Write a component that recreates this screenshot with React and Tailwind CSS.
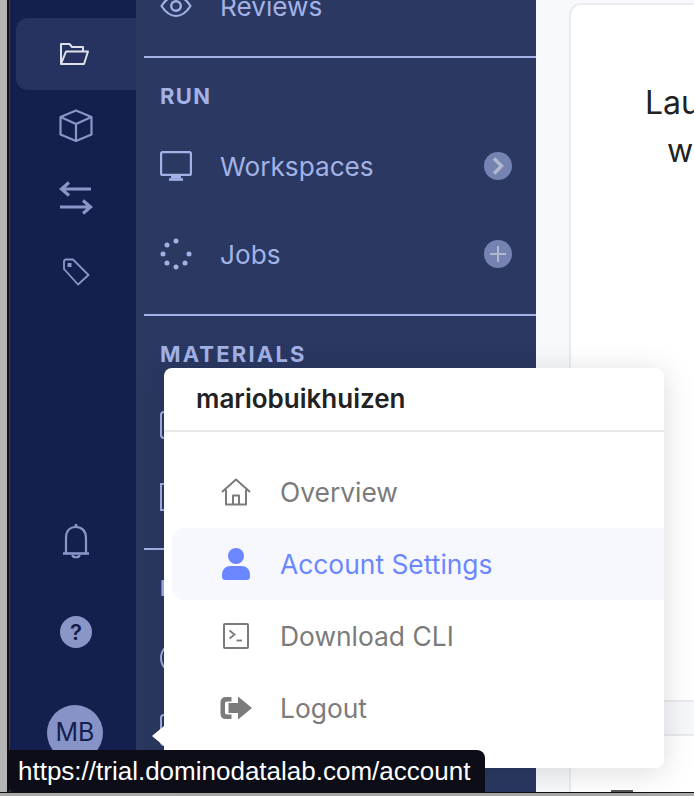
import React from "react";

const Cube = () => (
  <svg width="34" height="34" viewBox="0 0 34 34" fill="none" stroke="#8a96c8" strokeWidth="2.2" strokeLinejoin="round">
    <path d="M17 1.5 32.5 8v17.5L17 32 1.5 25.5V8Z" />
    <path d="M1.5 8 17 15l15.5-7M17 15v17" />
  </svg>
);

const Folder = () => (
  <svg width="29" height="22" viewBox="0 0 29 22" fill="none" stroke="#dfe1ea" strokeWidth="2" strokeLinejoin="round">
    <path d="M1 21V1h8.5l2.5 3h11v4" />
    <path d="M1 21 6 8.5h22L24 21Z" />
  </svg>
);

const Arrows = () => (
  <svg width="34" height="34" viewBox="0 0 34 34" fill="none" stroke="#8a96c8" strokeWidth="3.2">
    <path d="M32 8H3M10 1.5 2.5 8l7.500 6.500" />
    <path d="M1 26h30M24 19.500 31.500 26 24 32.500" />
  </svg>
);

const Tag = () => (
  <svg width="28" height="28" viewBox="0 0 28 28" fill="none" stroke="#8a96c8" strokeWidth="1.8" strokeLinejoin="round">
    <path d="M2 3.500Q2 1.500 4 1.500H11L26.500 17 16 26.500 2 11Z" />
    <rect x="5.500" y="5" width="4" height="4" fill="#8a96c8" stroke="none" />
  </svg>
);

const Bell = () => (
  <svg width="28" height="36" viewBox="0 0 28 36" fill="none" stroke="#8a96c8" strokeWidth="2.200">
    <path d="M4 29V14C4 7 8 3 14 3s10 4 10 11v15" />
    <path d="M1 29.500h26" strokeWidth="2.600" />
    <path d="M10.500 31c0 3 7 3 7 0" />
    <path d="M14 0v3" strokeWidth="2.600" />
  </svg>
);

const Eye = () => (
  <svg width="32" height="24" viewBox="0 0 32 24" fill="none" stroke="#a3b2e6" strokeWidth="2.200">
    <path d="M1.500 12C6 5 10.500 2 16 2s10 3 14.500 10C26 19 21.500 22 16 22S6 19 1.500 12Z" strokeLinejoin="round" />
    <circle cx="16" cy="12" r="4.800" strokeWidth="2.400" />
  </svg>
);

const Monitor = () => (
  <svg width="32" height="30" viewBox="0 0 32 30" fill="none" stroke="#a3b2e6" strokeWidth="2.200">
    <rect x="1.100" y="1.100" width="29.800" height="22.800" rx="1.500" />
    <path d="M11 26h10" strokeWidth="2.600" />
    <path d="M9 28.500h14" strokeWidth="2.600" />
  </svg>
);

const Dots = () => {
  const pts = [[16, 3], [7, 7], [3, 16], [7, 25], [16, 29], [25, 25], [29, 16]];
  return (
    <svg width="32" height="32" viewBox="0 0 32 32" fill="#a3b2e6">
      {pts.map(([x, y]) => (
        <circle key={`${x}-${y}`} cx={x} cy={y} r="2.500" />
      ))}
    </svg>
  );
};

const Chevron = () => (
  <svg width="14" height="18" viewBox="0 0 14 18" fill="none" stroke="#b4b8ce" strokeWidth="3.500">
    <path d="M3 1.500 10.500 9 3 16.500" />
  </svg>
);

const Plus = () => (
  <svg width="16" height="16" viewBox="0 0 16 16" fill="none" stroke="#b4b8ce" strokeWidth="2">
    <path d="M8 0v16M0 8h16" />
  </svg>
);

const Home = () => (
  <svg width="30" height="28" viewBox="0 0 30 28" fill="none" stroke="#7b7b7b" strokeWidth="2" strokeLinejoin="round">
    <path d="M1 14 15 1.500 29 14" />
    <path d="M5 11.500V26.500H25V11.500" />
    <path d="M12 26.500V17.500h6v9" />
  </svg>
);

const User = () => (
  <svg width="28" height="32" viewBox="0 0 28 32" fill="#6a87ff">
    <circle cx="14" cy="8" r="8" />
    <path d="M0 27C0 21 4 18 8.500 18h11C24 18 28 21 28 27v1.500Q28 32 24.500 32h-21Q0 32 0 28.500Z" />
  </svg>
);

const Terminal = () => (
  <svg width="26" height="26" viewBox="0 0 26 26" fill="none" stroke="#7b7b7b" strokeWidth="1.800">
    <rect x="1" y="1" width="24" height="24" rx="1" strokeWidth="2" />
    <path d="m6.500 7.500 5 4-5 4" />
    <path d="M13.500 17.500h5.500" />
  </svg>
);

const Logout = () => (
  <svg width="32" height="24" viewBox="0 0 32 24" fill="#7b7b7b">
    <path d="M11.500 1H6Q0.500 1 0.500 6.500v11Q0.500 23 6 23h5.500v-4.500H7q-2 0-2-2v-9q0-2 2-2h4.500Z" />
    <path d="M8.500 7H18V0.500L32 12 18 23.500V17H8.500Z" />
  </svg>
);

function RailItem({ children, active, className = "" }) {
  return (
    <div className={`flex h-[72px] w-[120px] items-center justify-center rounded-l-xl ${active ? "bg-[#263260]" : ""} ${className}`}>
      {children}
    </div>
  );
}

function NavRow({ icon, label, action, tall = true }) {
  return (
    <div className={`flex items-center pl-4 pr-6 ${tall ? "h-[88px]" : "h-[72px]"}`}>
      <div className="flex w-8 justify-center">{icon}</div>
      {label && <span className="ml-7 flex-1 pt-0.5 text-[26.200px] leading-8 text-[#a3b2e6]">{label}</span>}
      {action && (
        <span className="flex h-7 w-7 items-center justify-center rounded-full bg-[#7583b3]">{action}</span>
      )}
    </div>
  );
}

function SectionLabel({ children, className = "" }) {
  return (
    <div className={`h-6 pl-4 text-[22px] leading-6 font-bold text-[#a3b2e6] ${className}`}>
      {children}
    </div>
  );
}

const Divider = () => <div className="h-0.5 bg-[#a3b2e6]" />;

function MenuItem({ icon, label, active }) {
  return (
    <div className={`flex h-[72px] items-center rounded-l-xl ${active ? "bg-[#f7f8fe]" : ""}`}>
      <div className="ml-12 flex w-8 justify-center">{icon}</div>
      <span className={`ml-7 text-[26.400px] leading-8 ${active ? "text-[#6a87ff]" : "text-[#7b7b7b]"}`}>{label}</span>
    </div>
  );
}

export default function App() {
  return (
    <div className="relative flex h-[796px] w-[694px] flex-col overflow-hidden bg-[#a9a9a9] font-['Inter',sans-serif]">
      <div className="flex h-[792px] shrink-0 bg-white">
        <div className="w-[7px] shrink-0 bg-[#b5b5b5]" />
        <div className="w-0.5 shrink-0 bg-[#111111]" />
        <div className="w-px shrink-0 bg-[#2c3a70]" />

        {/* icon rail */}
        <aside className="flex w-[126px] shrink-0 flex-col justify-between bg-[#141f4d] pt-[18px] pb-[31px] pl-1.5">
          <div className="flex flex-col">
            <RailItem active className="pr-1"><Folder /></RailItem>
            <RailItem><Cube /></RailItem>
            <RailItem><Arrows /></RailItem>
            <RailItem className="pt-1"><Tag /></RailItem>
          </div>
          <div className="flex flex-col items-start">
            <RailItem><Bell /></RailItem>
            <div className="mt-[18px]">
              <RailItem>
                <span className="flex h-8 w-8 items-center justify-center rounded-full bg-[#8a96c8] text-[22px] font-semibold text-[#141f4d]">?</span>
              </RailItem>
            </div>
            <div className="mt-[37px] ml-[31px] flex h-14 w-14 items-center justify-center rounded-full bg-[#8792c6] text-[25px] text-[#141f4d]">
              MB
            </div>
          </div>
        </aside>

        {/* secondary nav */}
        <nav className="w-[400px] shrink-0 overflow-hidden bg-[#2a3862] pl-2">
          <div className="-mt-[38px]">
            <NavRow icon={<Eye />} label="Reviews" />
          </div>
          <div className="mt-1.5">
            <Divider />
          </div>
          <div className="pt-[26px] pb-4">
            <SectionLabel className="mb-3.5 tracking-[0.06em]">RUN</SectionLabel>
            <NavRow icon={<Monitor />} label="Workspaces" action={<Chevron />} />
            <NavRow icon={<Dots />} label="Jobs" action={<Plus />} />
          </div>
          <Divider />
          <div className="pt-[26px] pb-[15px]">
            <SectionLabel className="mb-[23px] tracking-[0.1em]">MATERIALS</SectionLabel>
            <NavRow tall={false} icon={<span className="block h-7 w-8 rounded border-2 border-[#a3b2e6]" />} />
            <NavRow tall={false} icon={<span className="block h-7 w-8 border-2 border-[#a3b2e6]" />} />
          </div>
          <Divider />
          <div className="pt-[26px]">
            <SectionLabel className="mb-[22px] tracking-[0.06em]">P</SectionLabel>
            <NavRow tall={false} icon={<span className="block h-8 w-8 rounded-full border-2 border-[#a3b2e6]" />} />
            <NavRow tall={false} icon={<span className="block h-8 w-8 rounded border-2 border-[#a3b2e6]" />} />
          </div>
        </nav>

        {/* main */}
        <main className="min-w-0 flex-1 overflow-hidden bg-[#f8f9fc] pt-[3px] pl-[33px]">
          <div className="flex h-[789px] w-[200px] flex-col rounded-tl-xl border-t-2 border-l-2 border-[#ebecf0] bg-white">
            <div className="h-[695px] pt-[74px] text-[32px] leading-[48px] whitespace-nowrap text-[#222222]">
              <div className="pl-[74px]">Launch</div>
              <div className="pl-[96px]">with</div>
            </div>
            <div className="h-9 border-y-2 border-[#ebebee] bg-[#f7f8fb]" />
            <div className="flex flex-1 items-end pl-[40px]">
              <div className="h-0.5 w-[22px] bg-[#555555]" />
            </div>
          </div>
        </main>
      </div>
      <div className="h-px shrink-0 bg-[#111111]" />

      {/* account menu */}
      <div className="absolute top-[368px] left-[164px] w-[500px] rounded-lg bg-white shadow-[0_4px_32px_rgba(0,0,0,0.14)]">
        <div className="absolute top-[358px] -left-3 h-0 w-0 border-y-[10px] border-r-[12px] border-y-transparent border-r-white" />
        <div className="flex h-[62px] items-center pb-0.5 pl-8 text-[26px] font-semibold text-[#222222]">
          mariobuikhuizen
        </div>
        <div className="h-0.5 bg-[#e8e8e8]" />
        <div className="py-6 pl-2">
          <MenuItem icon={<Home />} label="Overview" />
          <MenuItem active icon={<User />} label="Account Settings" />
          <MenuItem icon={<Terminal />} label="Download CLI" />
          <MenuItem icon={<Logout />} label="Logout" />
        </div>
      </div>

      {/* status tooltip */}
      <div className="absolute top-[750px] left-[7px] flex h-[42px] w-[478px] items-center rounded-tr-lg rounded-bl-lg bg-[#0c0d17] pl-[11px] font-['Liberation_Sans',sans-serif] text-[26px] whitespace-nowrap text-white">
        https://trial.dominodatalab.com/account
      </div>
    </div>
  );
}
